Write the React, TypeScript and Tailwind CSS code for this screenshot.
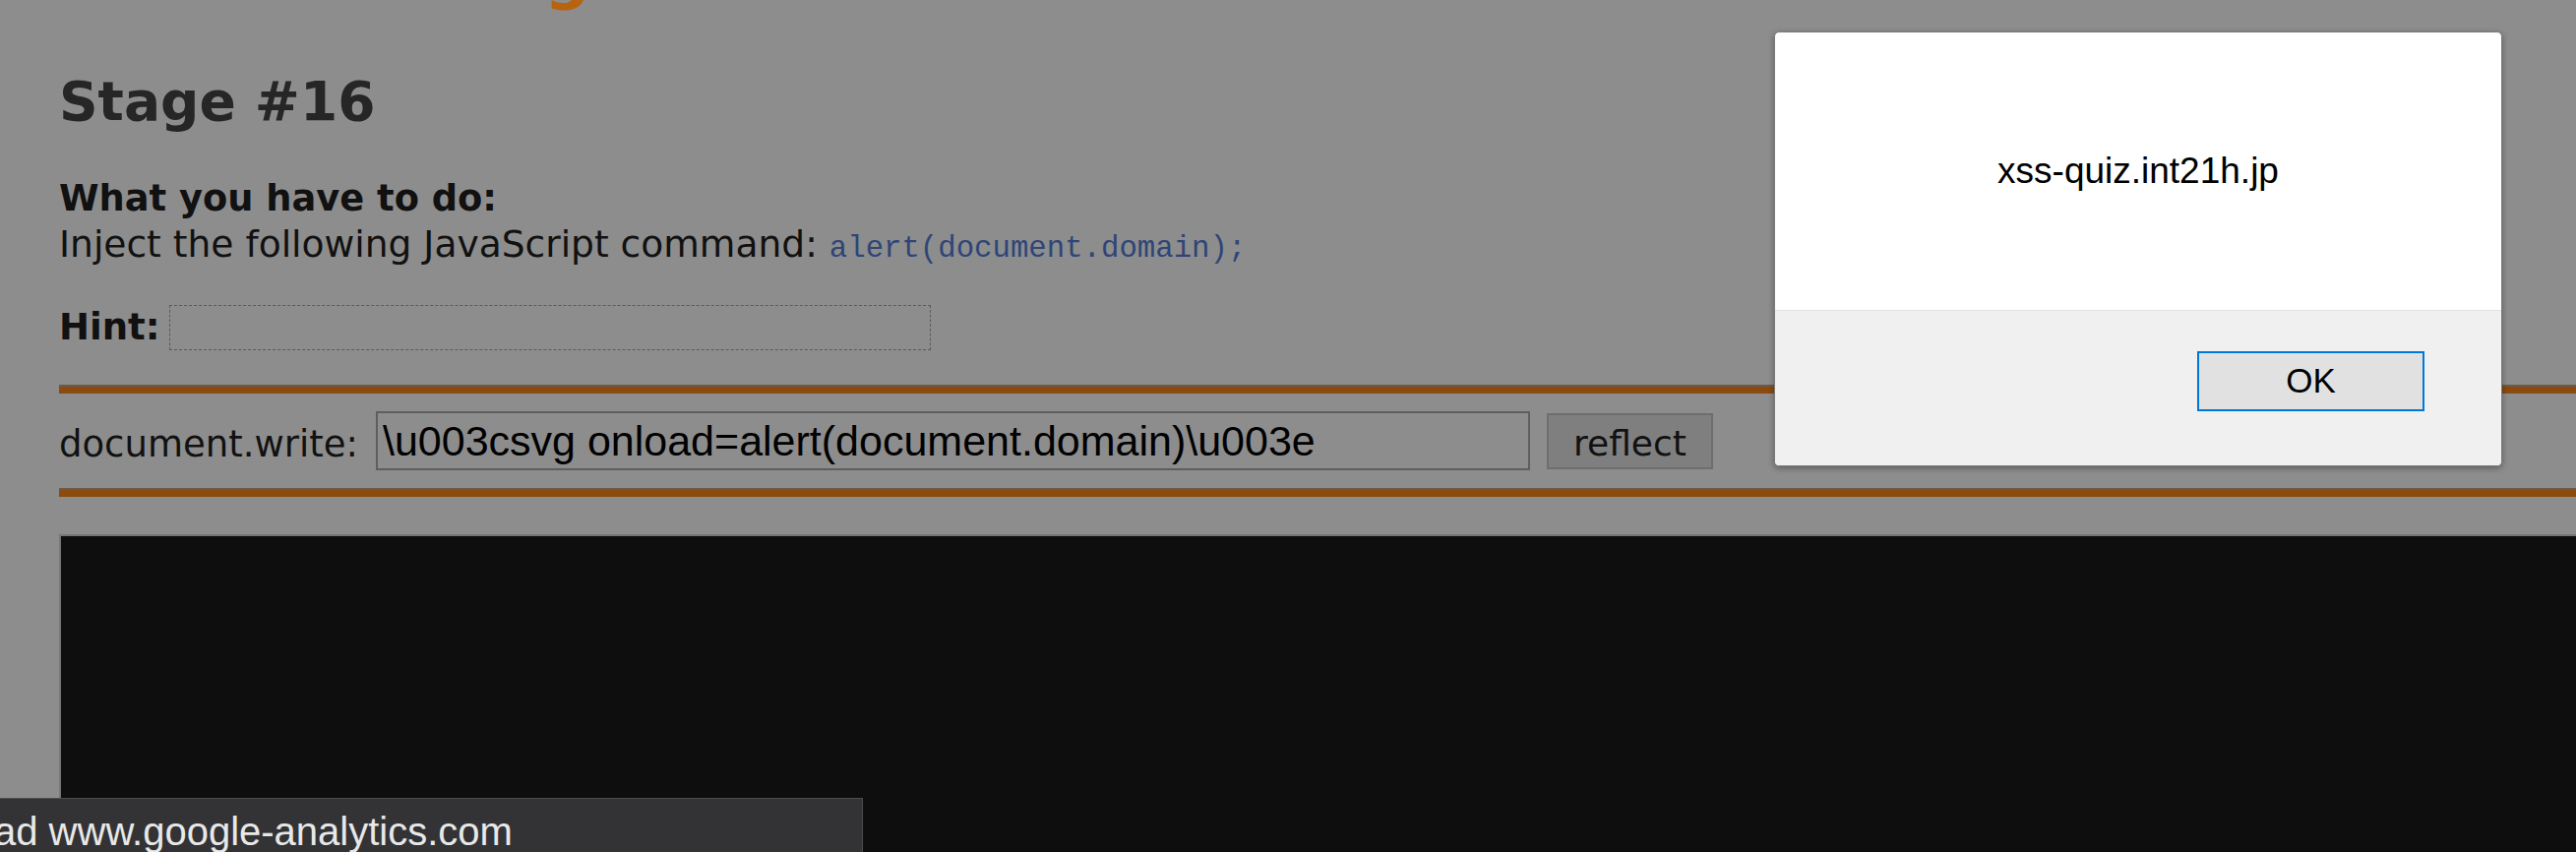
export default function App() {
  const payload = "\\u003csvg onload=alert(document.domain)\\u003e";

  return (
    <div className="relative w-[2618px] h-[866px] overflow-hidden bg-[#8d8d8d] text-[#111] font-['DejaVu_Sans',sans-serif]">
      <div className="flex h-full flex-col pl-[60px]">
        {/* page title, only the descender of the g is in view */}
        <div className="h-[12px] overflow-hidden">
          <div className="ml-[64px] -mt-[57px] whitespace-nowrap text-[64px] leading-[64px] font-bold text-[#b8630f]">
            XSS Challenges
          </div>
        </div>

        <h1 className="mt-[59px] text-[55px] leading-[64px] font-bold text-[#262626]">Stage #16</h1>

        <div className="mt-[43px] text-[37.6px] leading-[47px]">
          <div className="text-[36.8px] font-bold">What you have to do:</div>
          <div className="whitespace-nowrap">
            Inject the following JavaScript command:{" "}
            <code className="font-['Liberation_Mono',monospace] text-[30.7px] text-[#2f4577]">
              alert(document.domain);
            </code>
          </div>
        </div>

        <div className="mt-[33px] flex items-center text-[37px] leading-[47px]">
          <span className="font-bold">Hint:</span>
          <div className="ml-[10px] h-[46px] w-[774px] border border-dashed border-[#5a5a5a]" />
        </div>

        <div className="mt-[35px] h-[9px] border-t-2 border-[#6d5a48] bg-[#8b4a0e]" />

        {/* reflect form */}
        <div className="mt-[18px] flex h-[60px] items-center text-[37px] leading-[47px]">
          <label className="mt-[6px] whitespace-nowrap">document.write:</label>
          <input
            readOnly
            value={payload}
            className="ml-[18px] h-[60px] w-[1173px] border-2 border-[#5e5e5e] bg-transparent px-[5px] font-['Liberation_Sans',sans-serif] text-[43px] text-black outline-none"
          />
          <button className="ml-[17px] h-[57px] w-[169px] border-2 border-[#6e6e6e] bg-[#7f7f7f] pt-[5px] text-[36px] leading-[47px] text-[#111]">
            reflect
          </button>
        </div>

        <div className="mt-[18px] h-[9px] border-t-2 border-[#6d5a48] bg-[#8b4a0e]" />

        {/* output frame */}
        <div className="mt-[38px] flex-1 border-l-2 border-t-2 border-[#767676] bg-[#0e0e0e]" />
      </div>

      {/* alert dialog */}
      <div className="absolute left-[1803px] top-[32px] flex h-[442px] w-[740px] flex-col overflow-hidden rounded-[5px] border border-[#7a7a7a] bg-white font-['Liberation_Sans',sans-serif] shadow-[0_2px_6px_rgba(0,0,0,0.35)]">
        <div className="flex h-[282px] items-center justify-center text-[37px] text-black">xss-quiz.int21h.jp</div>
        <div className="flex flex-1 items-start justify-end border-t border-[#e3e3e3] bg-[#f0f0f0] pt-[41px] pr-[78px]">
          <button className="h-[61px] w-[231px] border-2 border-[#0078d7] bg-[#e1e1e1] text-[35px] text-black">OK</button>
        </div>
      </div>

      {/* browser status bubble */}
      <div className="absolute bottom-0 left-0 h-[55px] w-[877px] overflow-hidden border-r border-t border-[#4d4d4f] bg-[#333335]">
        <div className="-ml-[6px] whitespace-nowrap pt-[13px] font-['Liberation_Sans',sans-serif] text-[40px] leading-[40px] text-[#e8e8e8]">
          ad www.google-analytics.com
        </div>
      </div>
    </div>
  );
}
